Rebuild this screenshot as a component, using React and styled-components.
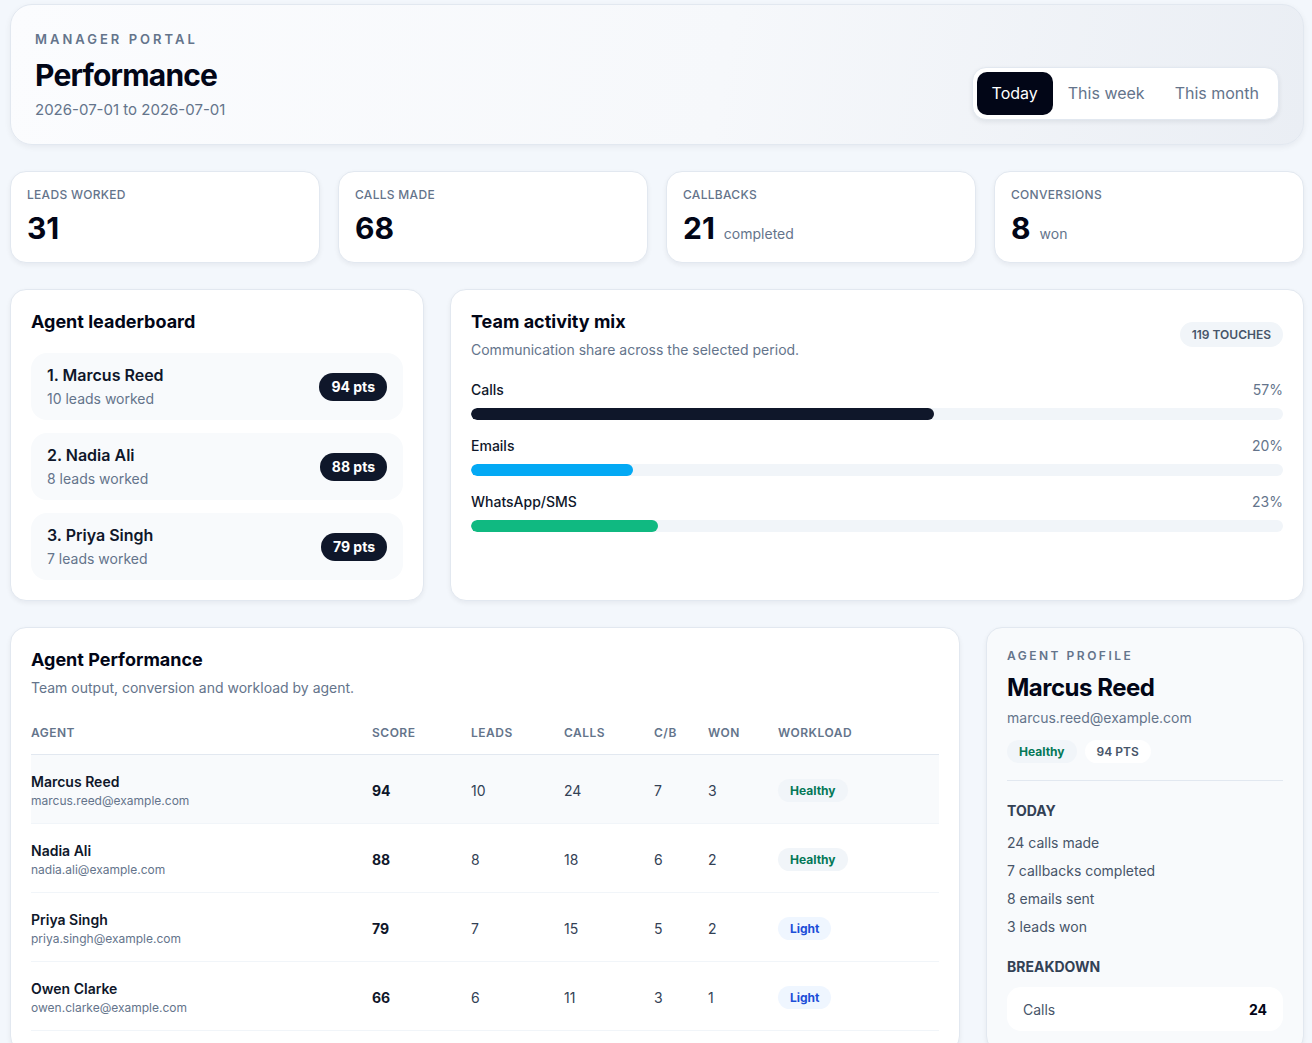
import React from "react";
import styled, { createGlobalStyle } from "styled-components";

const GlobalStyle = createGlobalStyle`
  * { box-sizing: border-box; }
  body {
    margin: 0;
    background: #f3f7fc;
    font-family: Inter, "Noto Sans", "Liberation Sans", sans-serif;
    color: #0f172a;
  }
`;

const stats = [
  { label: "Leads worked", value: "31" },
  { label: "Calls made", value: "68" },
  { label: "Callbacks", value: "21", sub: "completed" },
  { label: "Conversions", value: "8", sub: "won" },
];

const leaders = [
  { name: "1. Marcus Reed", leads: "10 leads worked", pts: "94 pts" },
  { name: "2. Nadia Ali", leads: "8 leads worked", pts: "88 pts" },
  { name: "3. Priya Singh", leads: "7 leads worked", pts: "79 pts" },
];

const mix = [
  { label: "Calls", pct: 57, color: "#0f172a" },
  { label: "Emails", pct: 20, color: "#03a9f4" },
  { label: "WhatsApp/SMS", pct: 23, color: "#10b981" },
];

const agents = [
  { name: "Marcus Reed", email: "marcus.reed@example.com", score: 94, leads: 10, calls: 24, cb: 7, won: 3, load: "Healthy" },
  { name: "Nadia Ali", email: "nadia.ali@example.com", score: 88, leads: 8, calls: 18, cb: 6, won: 2, load: "Healthy" },
  { name: "Priya Singh", email: "priya.singh@example.com", score: 79, leads: 7, calls: 15, cb: 5, won: 2, load: "Light" },
  { name: "Owen Clarke", email: "owen.clarke@example.com", score: 66, leads: 6, calls: 11, cb: 3, won: 1, load: "Light" },
];

export default function App() {
  const [range, setRange] = React.useState("Today");
  return (
    <>
      <GlobalStyle />
      <Page>
        <Header>
          <div>
            <Eyebrow>Manager portal</Eyebrow>
            <PageTitle>Performance</PageTitle>
            <DateRange>2026-07-01 to 2026-07-01</DateRange>
          </div>
          <Tabs>
            {["Today", "This week", "This month"].map((t) => (
              <Tab key={t} $active={range === t} onClick={() => setRange(t)}>
                {t}
              </Tab>
            ))}
          </Tabs>
        </Header>

        <StatGrid>
          {stats.map((s) => (
            <StatCard key={s.label}>
              <StatLabel>{s.label}</StatLabel>
              <StatValueRow>
                <StatValue>{s.value}</StatValue>
                {s.sub && <StatSub>{s.sub}</StatSub>}
              </StatValueRow>
            </StatCard>
          ))}
        </StatGrid>

        <MidRow>
          <Card>
            <CardTitle>Agent leaderboard</CardTitle>
            <LeaderList>
              {leaders.map((l) => (
                <LeaderItem key={l.name}>
                  <div>
                    <LeaderName>{l.name}</LeaderName>
                    <LeaderSub>{l.leads}</LeaderSub>
                  </div>
                  <PtsPill>{l.pts}</PtsPill>
                </LeaderItem>
              ))}
            </LeaderList>
          </Card>

          <Card>
            <CardHead>
              <div>
                <CardTitle>Team activity mix</CardTitle>
                <CardSub>Communication share across the selected period.</CardSub>
              </div>
              <CountBadge>119 touches</CountBadge>
            </CardHead>
            <Bars>
              {mix.map((m) => (
                <div key={m.label}>
                  <BarHead>
                    <BarLabel>{m.label}</BarLabel>
                    <BarPct>{m.pct}%</BarPct>
                  </BarHead>
                  <Track>
                    <Fill $color={m.color} style={{ width: `${m.pct}%` }} />
                  </Track>
                </div>
              ))}
            </Bars>
          </Card>
        </MidRow>

        <BottomRow>
          <Card>
            <CardTitle>Agent Performance</CardTitle>
            <CardSub>Team output, conversion and workload by agent.</CardSub>
            <Table>
              <HeadRow>
                <span>Agent</span>
                <span>Score</span>
                <span>Leads</span>
                <span>Calls</span>
                <span>C/B</span>
                <span>Won</span>
                <span>Workload</span>
              </HeadRow>
              {agents.map((a, i) => (
                <BodyRow key={a.name} $selected={i === 0}>
                  <div>
                    <AgentName>{a.name}</AgentName>
                    <AgentEmail>{a.email}</AgentEmail>
                  </div>
                  <Score>{a.score}</Score>
                  <Num>{a.leads}</Num>
                  <Num>{a.calls}</Num>
                  <Num>{a.cb}</Num>
                  <Num>{a.won}</Num>
                  <div>
                    <LoadPill $light={a.load === "Light"}>{a.load}</LoadPill>
                  </div>
                </BodyRow>
              ))}
            </Table>
          </Card>

          <ProfileCard>
            <ProfileEyebrow>Agent profile</ProfileEyebrow>
            <ProfileName>Marcus Reed</ProfileName>
            <ProfileEmail>marcus.reed@example.com</ProfileEmail>
            <PillRow>
              <LoadPill>Healthy</LoadPill>
              <PointsPill>94 PTS</PointsPill>
            </PillRow>
            <Divider />
            <SectionHead>Today</SectionHead>
            <TodayList>
              <li>24 calls made</li>
              <li>7 callbacks completed</li>
              <li>8 emails sent</li>
              <li>3 leads won</li>
            </TodayList>
            <SectionHead>Breakdown</SectionHead>
            <Breakdown>
              <BreakRow>
                <span>Calls</span>
                <strong>24</strong>
              </BreakRow>
            </Breakdown>
          </ProfileCard>
        </BottomRow>
      </Page>
    </>
  );
}

const Page = styled.div`
  padding: 4px 8px 24px 10px;
  display: flex;
  flex-direction: column;
  gap: 26px;
`;

const Header = styled.header`
  display: flex;
  justify-content: space-between;
  align-items: flex-end;
  padding: 25px 24px 24px 24px;
  border: 1px solid #e2e8f0;
  border-radius: 22px;
  background: linear-gradient(100deg, #fbfcfe 0%, #f6f8fb 55%, #eaeef4 100%);
  box-shadow: 0 2px 6px rgba(15, 23, 42, 0.06);
`;

const Eyebrow = styled.div`
  font-size: 13px;
  line-height: 18px;
  font-weight: 600;
  letter-spacing: 3px;
  text-transform: uppercase;
  color: #64748b;
`;

const PageTitle = styled.h1`
  margin: 8px 0 0;
  font-size: 30px;
  line-height: 38px;
  font-weight: 700;
  letter-spacing: -0.8px;
  color: #020617;
`;

const DateRange = styled.div`
  margin-top: 6px;
  font-size: 15px;
  line-height: 20px;
  color: #64748b;
`;

const Tabs = styled.div`
  display: flex;
  padding: 4px;
  background: #fff;
  border: 1px solid #e2e8f0;
  border-radius: 14px;
  box-shadow: 0 2px 5px rgba(15, 23, 42, 0.08);
`;

const Tab = styled.button`
  border: 0;
  font: inherit;
  font-size: 16px;
  line-height: 23px;
  padding: 10px 15px;
  border-radius: 10px;
  cursor: pointer;
  background: ${(p) => (p.$active ? "#020617" : "transparent")};
  color: ${(p) => (p.$active ? "#fff" : "#64748b")};
`;

const StatGrid = styled.div`
  display: grid;
  grid-template-columns: repeat(4, 1fr);
  gap: 18px;
`;

const Card = styled.section`
  background: #fff;
  border: 1px solid #e2e8f0;
  border-radius: 16px;
  padding: 20px;
  box-shadow: 0 2px 5px rgba(15, 23, 42, 0.06);
`;

const StatCard = styled(Card)`
  padding: 15px 16px 16px;
`;

const StatLabel = styled.div`
  font-size: 12px;
  line-height: 16px;
  font-weight: 500;
  letter-spacing: 0.3px;
  text-transform: uppercase;
  color: #64748b;
`;

const StatValueRow = styled.div`
  display: flex;
  align-items: baseline;
  gap: 9px;
  margin-top: 7px;
`;

const StatValue = styled.div`
  font-size: 30px;
  line-height: 36px;
  font-weight: 700;
  color: #020617;
`;

const StatSub = styled.span`
  font-size: 14px;
  color: #64748b;
`;

const MidRow = styled.div`
  display: grid;
  grid-template-columns: 414px 1fr;
  gap: 26px;
`;

const CardTitle = styled.h2`
  margin: 0;
  font-size: 18px;
  line-height: 24px;
  font-weight: 700;
  color: #020617;
`;

const CardSub = styled.p`
  margin: 6px 0 0;
  font-size: 14px;
  line-height: 20px;
  color: #64748b;
`;

const LeaderList = styled.div`
  display: flex;
  flex-direction: column;
  gap: 13px;
  margin-top: 19px;
`;

const LeaderItem = styled.div`
  display: flex;
  align-items: center;
  justify-content: space-between;
  height: 67px;
  padding: 0 16px;
  border-radius: 16px;
  background: #f8fafc;
`;

const LeaderName = styled.div`
  font-size: 16px;
  line-height: 22px;
  font-weight: 600;
  color: #0f172a;
`;

const LeaderSub = styled.div`
  margin-top: 3px;
  font-size: 14px;
  line-height: 20px;
  color: #64748b;
`;

const PtsPill = styled.span`
  padding: 4px 12px;
  border-radius: 999px;
  background: #0f172a;
  color: #fff;
  font-size: 14px;
  line-height: 20px;
  font-weight: 700;
`;

const CardHead = styled.div`
  display: flex;
  justify-content: space-between;
  align-items: flex-start;
`;

const CountBadge = styled.span`
  margin-top: 12px;
  padding: 4px 12px;
  border-radius: 999px;
  background: #f1f5f9;
  color: #475569;
  font-size: 12px;
  line-height: 17px;
  font-weight: 600;
  text-transform: uppercase;
`;

const Bars = styled.div`
  display: flex;
  flex-direction: column;
  gap: 16px;
  margin-top: 20px;
`;

const BarHead = styled.div`
  display: flex;
  justify-content: space-between;
  font-size: 14px;
  line-height: 20px;
`;

const BarLabel = styled.span`
  font-weight: 500;
  color: #0f172a;
`;

const BarPct = styled.span`
  color: #64748b;
`;

const Track = styled.div`
  margin-top: 8px;
  height: 12px;
  border-radius: 999px;
  background: #f1f5f9;
  overflow: hidden;
`;

const Fill = styled.div`
  height: 100%;
  border-radius: 999px;
  background: ${(p) => p.$color};
`;

const BottomRow = styled.div`
  display: grid;
  grid-template-columns: 1fr 318px;
  gap: 26px;
  align-items: start;
`;

const Table = styled.div`
  margin-top: 27px;
`;

const cols = "341px 99px 93px 90px 54px 70px 1fr";

const HeadRow = styled.div`
  display: grid;
  grid-template-columns: ${cols};
  padding-bottom: 13px;
  border-bottom: 1px solid #e2e8f0;
  font-size: 12px;
  line-height: 16px;
  font-weight: 600;
  letter-spacing: 0.5px;
  text-transform: uppercase;
  color: #64748b;
`;

const BodyRow = styled.div`
  display: grid;
  grid-template-columns: ${cols};
  align-items: center;
  height: 69px;
  padding-top: 2px;
  border-bottom: 1px solid #f1f5f9;
  background: ${(p) => (p.$selected ? "#f8fafc" : "transparent")};
  font-size: 14px;
  color: #334155;
`;

const AgentName = styled.div`
  font-size: 14px;
  line-height: 20px;
  font-weight: 600;
  color: #0f172a;
`;

const AgentEmail = styled.div`
  margin-top: 1px;
  font-size: 12px;
  line-height: 16px;
  color: #64748b;
`;

const Score = styled.span`
  font-weight: 700;
  color: #0f172a;
`;

const Num = styled.span``;

const LoadPill = styled.span`
  display: inline-block;
  padding: 3px 12px;
  border-radius: 999px;
  background: ${(p) => (p.$light ? "#eff6ff" : "#f1f5f9")};
  color: ${(p) => (p.$light ? "#1d4ed8" : "#047857")};
  font-size: 12px;
  line-height: 17px;
  font-weight: 700;
`;

const ProfileCard = styled(Card)`
  background: #f8fafc;
`;

const ProfileEyebrow = styled.div`
  font-size: 12px;
  line-height: 16px;
  font-weight: 600;
  letter-spacing: 2.5px;
  text-transform: uppercase;
  color: #64748b;
`;

const ProfileName = styled.div`
  margin-top: 8px;
  font-size: 24px;
  line-height: 32px;
  font-weight: 700;
  letter-spacing: -0.5px;
  color: #020617;
`;

const ProfileEmail = styled.div`
  margin-top: 4px;
  font-size: 14px;
  line-height: 20px;
  color: #64748b;
`;

const PillRow = styled.div`
  display: flex;
  gap: 8px;
  margin-top: 12px;
`;

const PointsPill = styled.span`
  padding: 3px 12px;
  border-radius: 999px;
  background: #fff;
  color: #475569;
  font-size: 12px;
  line-height: 17px;
  font-weight: 600;
`;

const Divider = styled.hr`
  margin: 17px 0 0;
  border: 0;
  border-top: 1px solid #e2e8f0;
`;

const SectionHead = styled.div`
  margin-top: 20px;
  font-size: 14px;
  line-height: 20px;
  font-weight: 700;
  text-transform: uppercase;
  color: #334155;
`;

const TodayList = styled.ul`
  list-style: none;
  margin: 12px 0 0;
  padding: 0;
  display: flex;
  flex-direction: column;
  gap: 8px;
  font-size: 14px;
  line-height: 20px;
  color: #475569;
`;

const Breakdown = styled.div`
  display: flex;
  flex-direction: column;
  gap: 10px;
  margin-top: 10px;
`;

const BreakRow = styled.div`
  display: flex;
  justify-content: space-between;
  align-items: center;
  height: 44px;
  padding: 0 16px;
  border-radius: 14px;
  background: #fff;
  font-size: 14px;
  color: #475569;

  strong {
    font-weight: 700;
    color: #020617;
  }
`;
